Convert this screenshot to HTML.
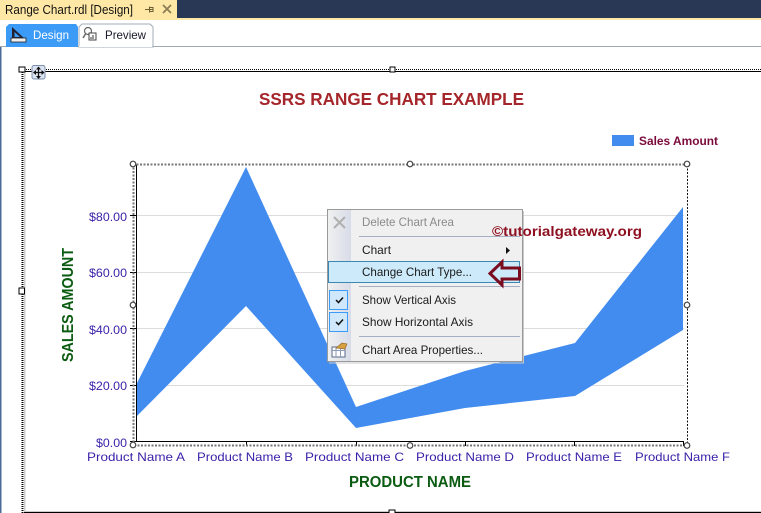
<!DOCTYPE html>
<html><head><meta charset="utf-8"><style>
html,body{margin:0;padding:0;background:#fff;width:761px;height:513px;overflow:hidden}
svg{display:block}
text{font-family:"Liberation Sans",sans-serif}
</style></head><body>
<svg width="761" height="513" viewBox="0 0 761 513" xmlns="http://www.w3.org/2000/svg">
<defs><linearGradient id="g" x1="0" x2="1" y1="0" y2="0"><stop offset="0" stop-color="#f0f0f0"/><stop offset="1" stop-color="#d8dce8"/></linearGradient></defs>
<rect width="761" height="513" fill="#fff"/>
<!-- top -->
<rect width="761" height="18" fill="#293955"/>
<rect y="18" width="761" height="2" fill="#ffe8a6"/>
<rect width="177" height="20" fill="#ffe8a6"/>
<text x="5" y="14" font-size="12.500" fill="#111" textLength="128" lengthAdjust="spacingAndGlyphs">Range Chart.rdl [Design]</text>
<path d="M145 9.500H149M149.500 6.500V12.500M149.500 7.500H153V11.500H149.500M150 9.500H153" stroke="#6b5d33" fill="none"/>
<path d="M163 5L171 13M171 5L163 13" stroke="#8a7d58" stroke-width="1.800"/>
<!-- tabs -->
<rect y="46" width="761" height="1" fill="#a0a8b4"/>
<path d="M6 47V27L9 24H76L78 27V47Z" fill="#3d9bf8"/>
<path d="M79 47V27L82 24H150L153 27V47Z" fill="#fff" stroke="#a3abb8"/>
<path d="M79 46.500H152" stroke="#fff"/>
<path d="M12 27L12 39H25Z M14.500 32L14.500 37H20Z" fill="#223" fill-rule="evenodd"/>
<rect x="11" y="38" width="15" height="4" fill="#eee" stroke="#222" stroke-width=".8"/>
<text x="33" y="39" font-size="12" fill="#fff" textLength="36" lengthAdjust="spacingAndGlyphs">Design</text>
<circle cx="88" cy="31" r="3.500" fill="#fff" stroke="#666" stroke-width="1.200"/>
<path d="M85.500 34L83 38" stroke="#666" stroke-width="1.500"/>
<rect x="89" y="33" width="7" height="7" fill="#fff" stroke="#444"/>
<path d="M91 39V37M93 39V35" stroke="#333"/>
<text x="105" y="39" font-size="12" fill="#1a1a2a" textLength="41" lengthAdjust="spacingAndGlyphs">Preview</text>
<!-- left edge -->
<rect x="0" y="47" width="1.500" height="466" fill="#4c6a98"/>
<!-- report frame -->
<rect x="24" y="72" width="737" height="440" fill="#fff"/>
<rect x="24" y="72" width="1.500" height="439" fill="#ccc"/>
<path d="M24 71.500H761" stroke="#000"/>
<path d="M24 69.500H761" stroke="#000" stroke-dasharray="1 1"/>
<path d="M22.500 70V513" stroke="#000" stroke-dasharray="1 1" stroke-width="2"/>
<rect x="24" y="511" width="737" height="1" fill="#ccc"/>
<rect x="24" y="512" width="737" height="1" fill="#000"/>
<rect x="19" y="67" width="6" height="5" fill="#fff" stroke="#000"/>
<rect x="19" y="288" width="5.500" height="6" fill="#fff" stroke="#000"/>
<rect x="390" y="67" width="5" height="5" fill="#fff" stroke="#000"/>
<rect x="389" y="510" width="6" height="4" fill="#fff" stroke="#000"/>
<rect x="32" y="65.500" width="13" height="13.500" rx="2" fill="#dbe3f2" stroke="#7c8fae"/>
<path d="M38.500 67V78M33.500 72.500H44" stroke="#111" stroke-width="1.200"/>
<path d="M38.500 66.500L36 69.500H41ZM38.500 79L36 76H41ZM33 72.500L36 70V75ZM44.500 72.500L41.500 70V75Z" fill="#111"/>
<!-- title -->
<text x="259" y="105" font-size="17.500" font-weight="bold" fill="#a5262a" textLength="265" lengthAdjust="spacingAndGlyphs">SSRS RANGE CHART EXAMPLE</text>
<!-- legend -->
<rect x="612" y="135" width="22" height="11" fill="#428cf0"/>
<text x="639" y="145" font-size="12" font-weight="bold" fill="#7a0a3a" textLength="79" lengthAdjust="spacingAndGlyphs">Sales Amount</text>
<!-- gridlines -->
<g stroke="#dcdcdc"><path d="M136 215.500H684M136 272.500H684M136 328.500H684M136 385.500H684"/></g>
<!-- area -->
<path d="M136 385L246 167L356 407L465 371L575 343L683 207V330L575 396L465 408L356 428L246 306L136 417Z" fill="#428cf0"/>
<!-- axes -->
<path d="M136.500 165V442M130 215.500H136M130 272.500H136M130 328.500H136M130 385.500H136M130 441.500H136M136 441.500H684" stroke="#000" fill="none"/>
<path d="M246.500 441V446M356.500 441V446M465.500 441V446M574.500 441V446M683.500 441V446" stroke="#000"/>
<!-- plot selection -->
<path d="M133 164.500H687M133.500 164V445M134 445.500H687" stroke="#777" stroke-width="2" stroke-dasharray="2 1.500" fill="none"/>
<path d="M687.500 165V445" stroke="#111" stroke-dasharray="2 1.500" fill="none"/>
<g fill="#fff" stroke="#444" stroke-width="1.200">
<circle cx="133" cy="164" r="2.800"/><circle cx="410" cy="164" r="2.800"/><circle cx="687" cy="164" r="2.800"/>
<circle cx="133" cy="305" r="2.800"/><circle cx="687" cy="305" r="2.800"/>
<circle cx="133" cy="445" r="2.800"/><circle cx="410" cy="445.500" r="2.800"/><circle cx="687" cy="445.500" r="2.800"/>
</g>
<!-- y labels -->
<g font-size="12" fill="#3a1fa8">
<text x="89" y="221" textLength="38" lengthAdjust="spacingAndGlyphs">$80.00</text>
<text x="89" y="277" textLength="38" lengthAdjust="spacingAndGlyphs">$60.00</text>
<text x="89" y="334" textLength="38" lengthAdjust="spacingAndGlyphs">$40.00</text>
<text x="89" y="390" textLength="38" lengthAdjust="spacingAndGlyphs">$20.00</text>
<text x="96" y="447" textLength="31" lengthAdjust="spacingAndGlyphs">$0.00</text>
</g>
<!-- x labels -->
<g font-size="12" fill="#3a1fa8">
<text x="87" y="461" textLength="98" lengthAdjust="spacingAndGlyphs">Product Name A</text>
<text x="197" y="461" textLength="96" lengthAdjust="spacingAndGlyphs">Product Name B</text>
<text x="305" y="461" textLength="99" lengthAdjust="spacingAndGlyphs">Product Name C</text>
<text x="416" y="461" textLength="98" lengthAdjust="spacingAndGlyphs">Product Name D</text>
<text x="526" y="461" textLength="96" lengthAdjust="spacingAndGlyphs">Product Name E</text>
<text x="635" y="461" textLength="95" lengthAdjust="spacingAndGlyphs">Product Name F</text>
</g>
<text x="349" y="487" font-size="16" font-weight="bold" fill="#0b5c12" textLength="122" lengthAdjust="spacingAndGlyphs">PRODUCT NAME</text>
<text transform="translate(73,362) rotate(-90)" font-size="16" font-weight="bold" fill="#0b5c12" textLength="114" lengthAdjust="spacingAndGlyphs">SALES AMOUNT</text>
<!-- context menu -->
<rect x="327.500" y="209.500" width="195" height="152" fill="#f0f0f0" stroke="#9a9a9a"/>
<path d="M523.500 211V363H329" stroke="#c8c8c8" fill="none"/>
<rect x="328" y="210" width="23" height="151" fill="url(#g)"/>
<path d="M334 217L345 228M345 217L334 228" stroke="#b0b0b0" stroke-width="2"/>
<text x="362" y="226" font-size="12" fill="#8a8a8a" textLength="92" lengthAdjust="spacingAndGlyphs">Delete Chart Area</text>
<rect x="359" y="236" width="161" height="1" fill="#a5afc2"/>
<text x="362" y="254" font-size="12" fill="#1a1a1a" textLength="29" lengthAdjust="spacingAndGlyphs">Chart</text>
<path d="M506 247L510 250.500L506 254Z" fill="#111"/>
<rect x="328.500" y="261.500" width="191" height="21" fill="#cdeafa" stroke="#3c88b4"/>
<text x="362" y="276" font-size="12" fill="#1a1a1a" textLength="110" lengthAdjust="spacingAndGlyphs">Change Chart Type...</text>
<rect x="359" y="286" width="161" height="1" fill="#a5afc2"/>
<rect x="329.500" y="290.500" width="18" height="19" fill="#cfe8fb" stroke="#3d9bf8"/>
<path d="M336 300L338.500 302.500L343 297.500" stroke="#111" stroke-width="1.500" fill="none"/>
<text x="362" y="304" font-size="12" fill="#1a1a1a" textLength="94" lengthAdjust="spacingAndGlyphs">Show Vertical Axis</text>
<rect x="329.500" y="312.500" width="18" height="19" fill="#cfe8fb" stroke="#3d9bf8"/>
<path d="M336 322L338.500 324.500L343 319.500" stroke="#111" stroke-width="1.500" fill="none"/>
<text x="362" y="326" font-size="12" fill="#1a1a1a" textLength="111" lengthAdjust="spacingAndGlyphs">Show Horizontal Axis</text>
<rect x="359" y="336" width="161" height="1" fill="#a5afc2"/>
<rect x="332" y="347" width="13" height="10" fill="#fff" stroke="#5a6a8a"/>
<path d="M332 350.500H345M336 347V357M340.500 347V357" stroke="#8a9ab8"/>
<path d="M336 348L342 343L347 344L345 349Z" fill="#d8a040" stroke="#8a6020" stroke-width=".6"/>
<text x="362" y="354" font-size="12" fill="#1a1a1a" textLength="121" lengthAdjust="spacingAndGlyphs">Chart Area Properties...</text>
<!-- arrow -->
<path d="M490 273.500L502 262V268H519.500V279H502V285Z" fill="none" stroke="#7a0c20" stroke-width="3"/>
<!-- watermark -->
<text x="492" y="236" font-size="14" font-weight="bold" fill="#8e1020" textLength="150" lengthAdjust="spacingAndGlyphs">©tutorialgateway.org</text>
</svg>
</body></html>
